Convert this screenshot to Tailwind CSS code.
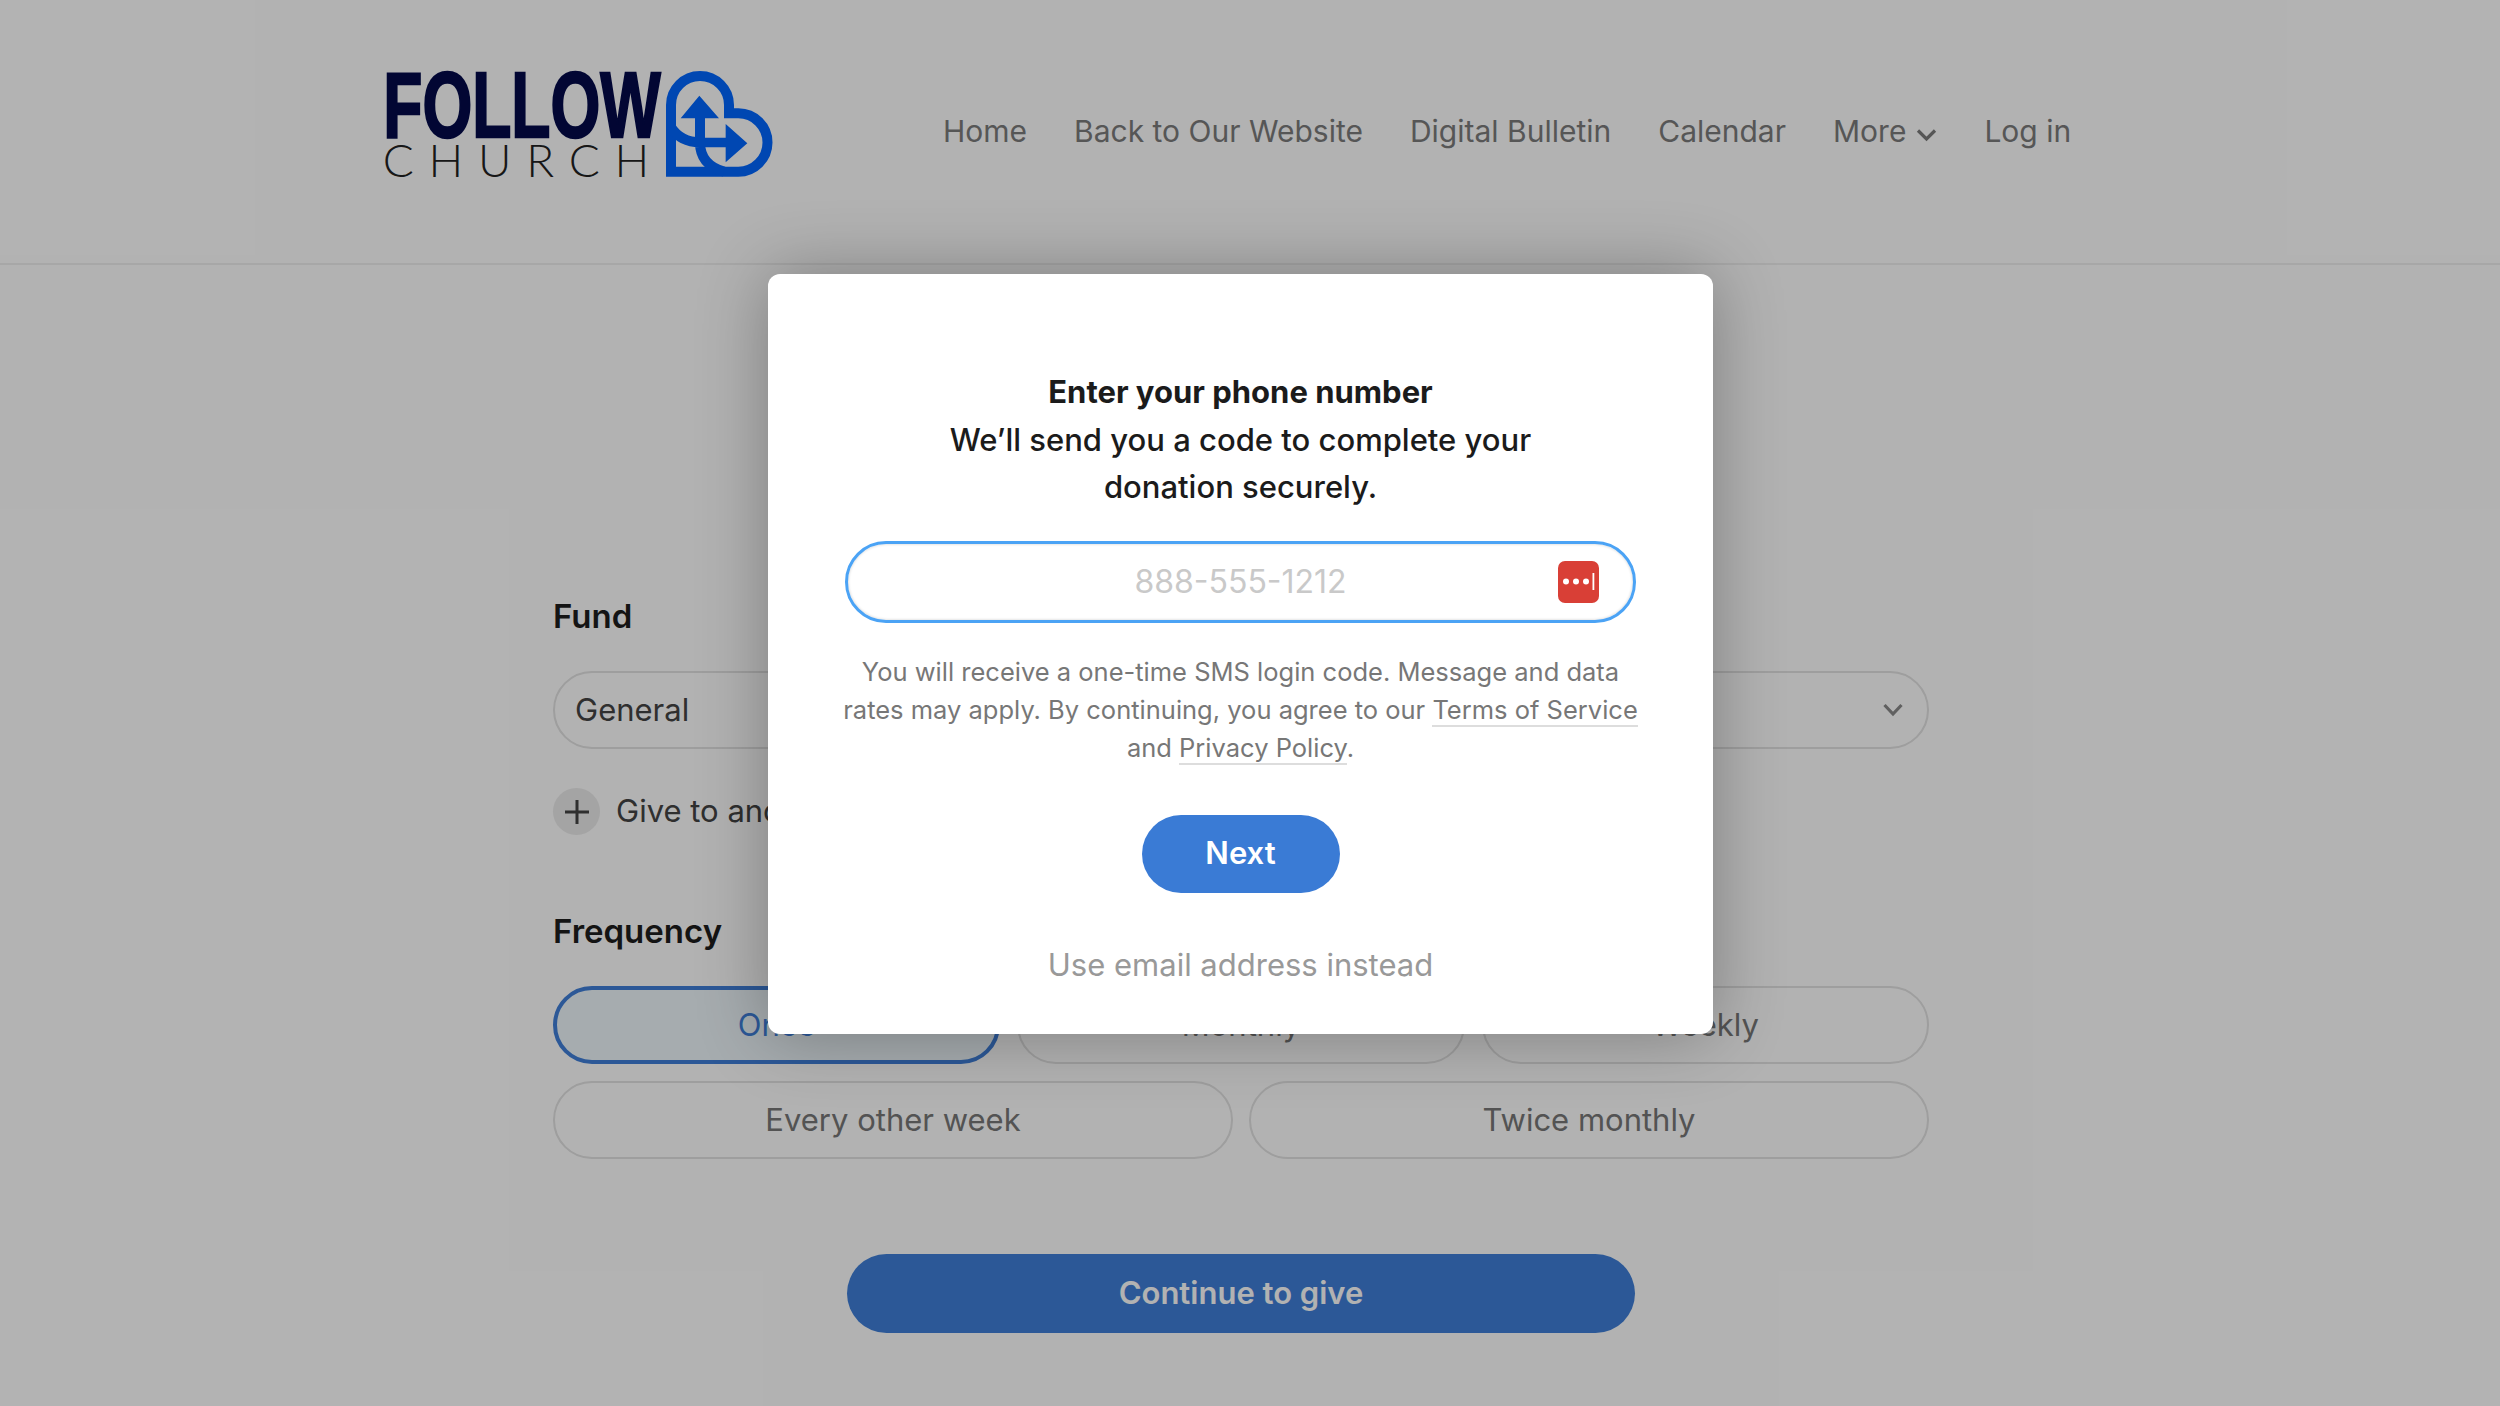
<!DOCTYPE html>
<html>
<head>
    <meta charset="utf-8">
    <title>Give</title>
    <script src="https://cdn.jsdelivr.net/npm/@tailwindcss/browser@4"></script>
</head>
<body class="bg-white font-['Inter',sans-serif] h-screen overflow-hidden relative">
    <!-- Page behind the dialog -->
    <header class="h-[265px] border-b-2 border-[#f0f0f0] flex items-center pl-[360px]">
        <svg class="mb-[14px] shrink-0" width="440" height="170" viewBox="0 0 1320 510" fill="none">
            <text x="70" y="291" textLength="832" lengthAdjust="spacingAndGlyphs" font-family="Liberation Sans" font-weight="700" font-size="278" fill="#030a4a" stroke="#030a4a" stroke-width="7">FOLLOW</text>
            <text x="68" y="410" textLength="800" font-family="Lato" font-weight="300" font-size="138" fill="#222222">CHURCH</text>
            <path d="M933 395 V195 A87 87 0 0 1 1107 195 V220 H1135 A87 87 0 0 1 1135 395 Z" stroke="#0066ff" stroke-width="30" stroke-linejoin="miter"/>
            <path d="M933 262 Q962 307 1020 307 M1092 395 Q1020 375 1020 307" stroke="#0066ff" stroke-width="30"/>
            <path d="M962 235 L1018 167 L1077 235 H1035 V293 H1097 V252 L1162 310 L1097 367 V322 H1005 V235 Z" fill="#0066ff"/>
        </svg>
        <nav class="ml-[143px] flex items-center gap-[47px] text-[30px] text-[#7c7c7c]">
            <a>Home</a>
            <a>Back to Our Website</a>
            <a>Digital Bulletin</a>
            <a>Calendar</a>
            <a class="flex items-center gap-[10px]">More
                <svg class="mt-[6px]" width="21" height="14" viewBox="0 0 21 14" fill="none" stroke="#7c7c7c" stroke-width="3.2"><path d="M2 2.5 L10.5 11 L19 2.5"/></svg>
            </a>
            <a>Log in</a>
        </nav>
    </header>

    <main class="ml-[553px] w-[1376px] pt-[331px]">
        <h2 class="text-[33px] leading-[40px] font-semibold text-[#1d1d1d]">Fund</h2>
        <div class="mt-[35px] h-[78px] rounded-full border-2 border-[#e2e2e2] flex items-center justify-between pl-[20px] pr-[24px] text-[31px] text-[#444444]">
            <span>General</span>
            <svg width="20" height="14" viewBox="0 0 20 14" fill="none" stroke="#8a8a8a" stroke-width="3.2"><path d="M1.5 2 L10 11 L18.5 2"/></svg>
        </div>
        <div class="mt-[39px] flex items-center gap-[16px] text-[31px] text-[#444444]">
            <span class="w-[47px] h-[47px] rounded-full bg-[#ebebeb] flex items-center justify-center">
                <svg width="26" height="26" viewBox="0 0 26 26" stroke="#444444" stroke-width="3"><path d="M13 1 V25 M1 13 H25"/></svg>
            </span>
            <span>Give to another fund</span>
        </div>
        <h2 class="mt-[76px] text-[33px] leading-[40px] font-semibold text-[#1d1d1d]">Frequency</h2>
        <div class="mt-[35px] grid grid-cols-3 gap-[17px] text-[31px] text-[#777777]">
            <button class="h-[78px] rounded-full border-[4px] border-[#3f7fd8] bg-[#eef7fb] text-[#3f7fd8]">Once</button>
            <button class="h-[78px] rounded-full border-2 border-[#e2e2e2]">Monthly</button>
            <button class="h-[78px] rounded-full border-2 border-[#e2e2e2]">Weekly</button>
        </div>
        <div class="mt-[17px] grid grid-cols-2 gap-[16px] text-[31px] text-[#777777]">
            <button class="h-[78px] rounded-full border-2 border-[#e2e2e2]">Every other week</button>
            <button class="h-[78px] rounded-full border-2 border-[#e2e2e2]">Twice monthly</button>
        </div>
        <div class="mt-[95px] flex justify-center">
            <button class="w-[788px] h-[79px] rounded-full bg-[#3f7fd8] text-white text-[31px] font-semibold">Continue to give</button>
        </div>
    </main>

    <!-- Dim layer and phone number dialog -->
    <div class="absolute inset-0 bg-black/30 pl-[768px] pt-[274px]">
        <div class="w-[945px] h-[760px] bg-white rounded-[12px] shadow-[0_0_70px_rgba(0,0,0,0.3)] pt-[94px] flex flex-col items-center">
            <h1 class="w-[640px] text-center text-[31px] leading-[47.5px] text-[#1b1b1b] font-medium">
                <span class="font-bold">Enter your phone number</span><br>
                We’ll send you a code to complete your donation securely.
            </h1>
            <div class="relative mt-[30px] w-[791px] h-[82px] rounded-full border-[3px] border-[#4ba3f5] flex items-center justify-center text-[32px] text-[#c9c9c9] shadow-[inset_0_0_3px_rgba(0,0,0,0.2)]">
                888-555-1212
                <svg class="absolute right-[34px] top-[17px]" width="41" height="42" viewBox="0 0 41 42">
                    <rect width="41" height="42" rx="7" fill="#d93f36"/>
                    <circle cx="8" cy="20.5" r="3" fill="#fff"/>
                    <circle cx="18" cy="20.5" r="3" fill="#fff"/>
                    <circle cx="28" cy="20.5" r="3" fill="#fff"/>
                    <rect x="34.5" y="12" width="1.8" height="17" fill="#fff"/>
                </svg>
            </div>
            <p class="mt-[30px] w-[800px] text-center text-[25.5px] leading-[38.4px] text-[#777777]">
                You will receive a one-time SMS login code. Message and data<br>
                rates may apply. By continuing, you agree to our <a class="border-b-2 border-[#dddddd]">Terms of Service</a><br>
                and <a class="border-b-2 border-[#dddddd]">Privacy Policy</a>.
            </p>
            <button class="mt-[47px] w-[198px] h-[78px] rounded-full bg-[#3a7bd5] text-white text-[31px] font-semibold">Next</button>
            <a class="mt-[48px] text-[31px] leading-[48px] text-[#999999]">Use email address instead</a>
        </div>
    </div>
</body>
</html>
